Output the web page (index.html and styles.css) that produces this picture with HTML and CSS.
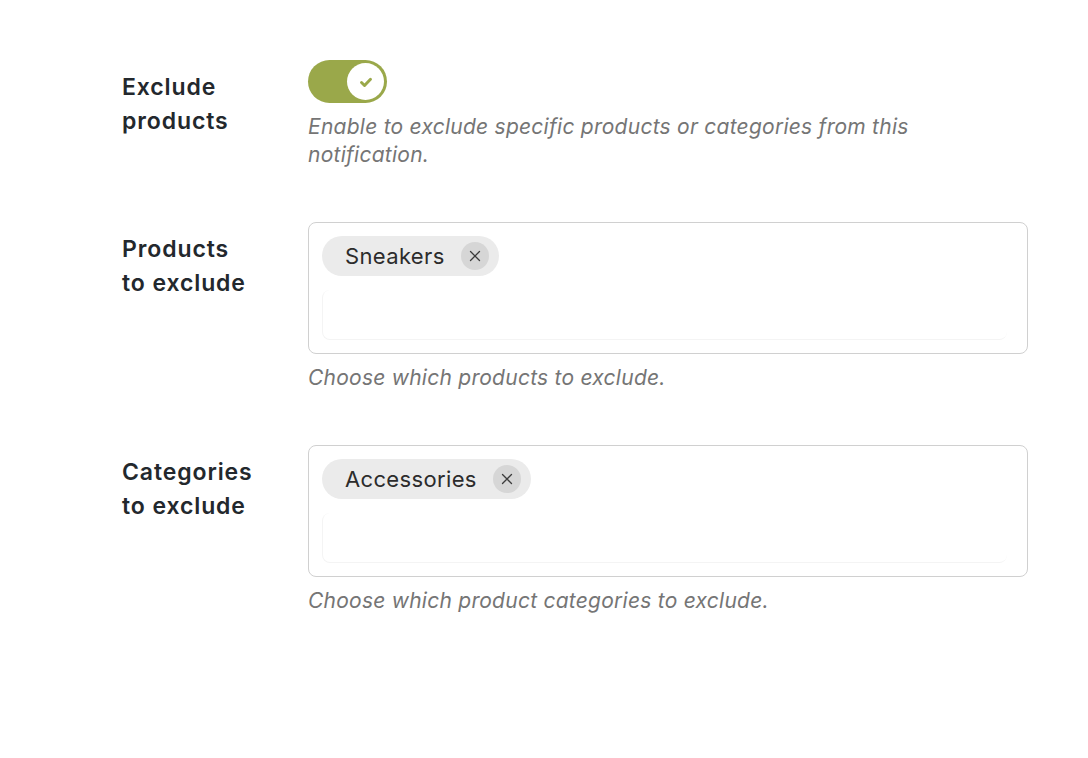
FILE: index.html
```html
<!DOCTYPE html>
<html lang="en">

<head>
    <meta charset="UTF-8">
    <title>Exclude products</title>
    <link rel="stylesheet" href="styles.css">
</head>

<body>
    <div class="settings">
        <div class="row">
            <div class="label">Exclude<br>products</div>
            <div class="field">
                <label class="toggle">
                    <input type="checkbox" checked>
                    <span class="track">
                        <span class="knob">
                            <svg width="18" height="18" viewBox="0 0 16 16">
                                <path d="M4 8.4l2.7 2.7 5.3-5.6" fill="none" stroke="#9aa84a" stroke-width="2.6" stroke-linecap="round" stroke-linejoin="round"/>
                            </svg>
                        </span>
                    </span>
                </label>
                <p class="help">Enable to exclude specific products or categories from this notification.</p>
            </div>
        </div>

        <div class="row">
            <div class="label">Products<br>to exclude</div>
            <div class="field">
                <div class="select">
                    <div class="chips">
                        <span class="chip">Sneakers
                            <span class="remove">
                                <svg width="12" height="12" viewBox="0 0 12 12">
                                    <path d="M1.5 1.5l9 9M10.5 1.5l-9 9" stroke="#3c3c3c" stroke-width="1.3" stroke-linecap="round"/>
                                </svg>
                            </span>
                        </span>
                    </div>
                    <div class="search"></div>
                </div>
                <p class="help">Choose which products to exclude.</p>
            </div>
        </div>

        <div class="row">
            <div class="label">Categories<br>to exclude</div>
            <div class="field">
                <div class="select">
                    <div class="chips">
                        <span class="chip">Accessories
                            <span class="remove">
                                <svg width="12" height="12" viewBox="0 0 12 12">
                                    <path d="M1.5 1.5l9 9M10.5 1.5l-9 9" stroke="#3c3c3c" stroke-width="1.3" stroke-linecap="round"/>
                                </svg>
                            </span>
                        </span>
                    </div>
                    <div class="search"></div>
                </div>
                <p class="help">Choose which product categories to exclude.</p>
            </div>
        </div>
    </div>
</body>

</html>
```

FILE: styles.css
```css
body {
    font-family: Inter, "Noto Sans", sans-serif;
    margin: 0;
    background: #fff;
    color: #1e1e1e;
}

.settings {
    padding: 60px 0 0 122px;
    display: flex;
    flex-direction: column;
    gap: 53px;
}

.row {
    display: grid;
    grid-template-columns: 186px 720px;
}

.label {
    font-size: 23px;
    font-weight: 600;
    letter-spacing: 0.9px;
    line-height: 34px;
    color: #23282d;
    padding-top: 10px;
}

.field {
    display: flex;
    flex-direction: column;
}

.toggle input {
    display: none;
}

.track {
    display: flex;
    align-items: center;
    justify-content: flex-end;
    width: 79px;
    height: 43px;
    box-sizing: border-box;
    padding: 0 3px;
    border-radius: 22px;
    background: #9aa84a;
}

.knob {
    display: flex;
    align-items: center;
    justify-content: center;
    width: 37px;
    height: 37px;
    border-radius: 50%;
    background: #fff;
}

.help {
    margin: 10px 0 0;
    font-size: 21px;
    font-style: italic;
    letter-spacing: 0.25px;
    line-height: 28px;
    color: #757575;
    max-width: 620px;
}

.select {
    height: 132px;
    box-sizing: border-box;
    border: 1px solid #d0d0d0;
    border-radius: 8px;
    padding: 13px 20px 13px 13px;
    display: flex;
    flex-direction: column;
    gap: 14px;
}

.chips {
    display: flex;
}

.chip {
    display: flex;
    align-items: center;
    gap: 16px;
    height: 40px;
    padding: 0 10px 0 23px;
    border-radius: 20px;
    background: #ebebeb;
    font-size: 22px;
    letter-spacing: 0.35px;
    color: #2c2c2c;
}

.remove {
    display: flex;
    align-items: center;
    justify-content: center;
    width: 28px;
    height: 28px;
    border-radius: 50%;
    background: #d6d6d6;
}

.search {
    flex: 1;
    border-left: 1px solid #f4f4f4;
    border-bottom: 1px solid #f4f4f4;
    border-radius: 8px;
}
```
